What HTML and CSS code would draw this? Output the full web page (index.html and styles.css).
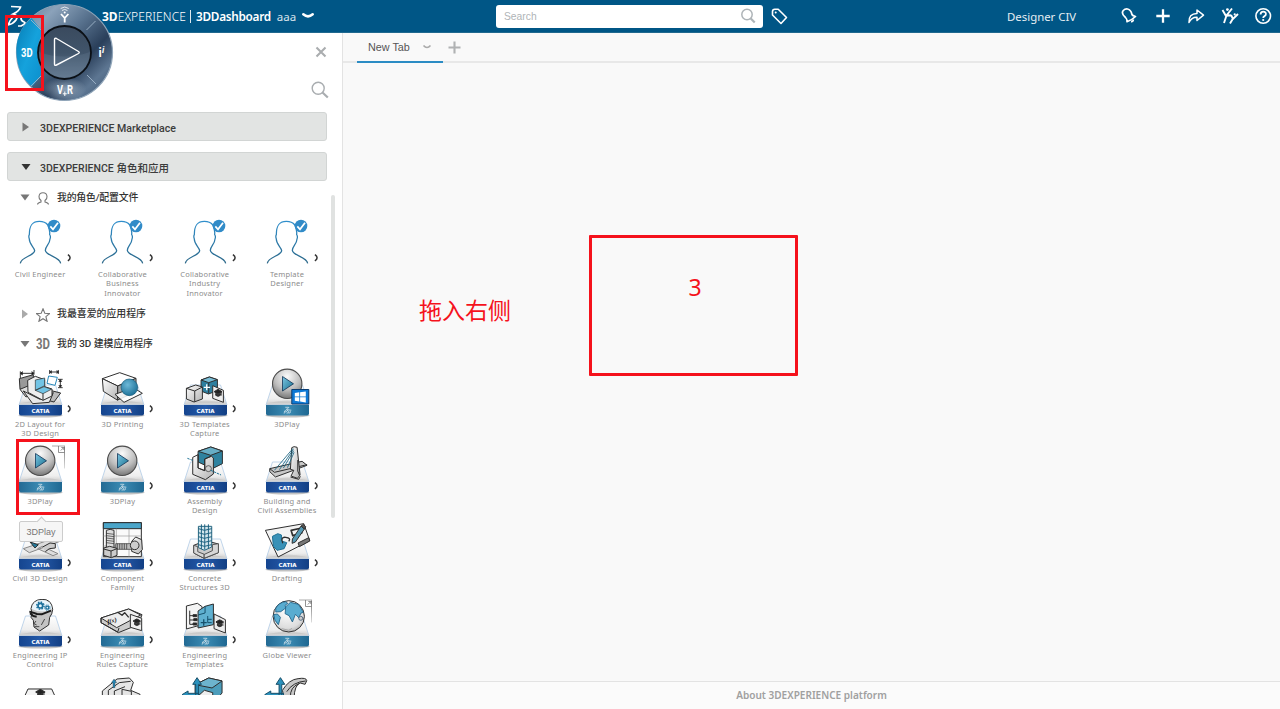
FILE: index.html
```html
<!DOCTYPE html>
<html lang="zh-CN">
<head>
<meta charset="utf-8">
<title>3DDashboard</title>
<link rel="stylesheet" href="styles.css">
</head>
<body>
<svg class="defs" aria-hidden="true">
  <defs>
    <linearGradient id="plate" x1="0" y1="0" x2="0" y2="1"><stop offset="0" stop-color="#fff"/><stop offset=".7" stop-color="#eee"/><stop offset="1" stop-color="#c8c8c8"/></linearGradient>
    <linearGradient id="navy" x1="0" y1="0" x2="1" y2="0"><stop offset="0" stop-color="#15458f"/><stop offset=".5" stop-color="#2459a8"/><stop offset="1" stop-color="#123f84"/></linearGradient>
    <linearGradient id="teal" x1="0" y1="0" x2="1" y2="0"><stop offset="0" stop-color="#236a94"/><stop offset=".5" stop-color="#3b8bb3"/><stop offset="1" stop-color="#1f6892"/></linearGradient>
    <linearGradient id="fade" x1="0" y1="0" x2="0" y2="1"><stop offset="0" stop-color="#777"/><stop offset="1" stop-color="#ddd"/></linearGradient>
    <linearGradient id="gray" x1="0" y1="0" x2="1" y2="1"><stop offset="0" stop-color="#fff"/><stop offset="1" stop-color="#b2b2b2"/></linearGradient>
    <linearGradient id="blue" x1="0" y1="0" x2="1" y2="1"><stop offset="0" stop-color="#7cc6e2"/><stop offset="1" stop-color="#17708f"/></linearGradient>
    <radialGradient id="ball" cx=".5" cy=".25" r=".75"><stop offset="0" stop-color="#fafafa"/><stop offset=".6" stop-color="#bdbdbd"/><stop offset="1" stop-color="#777"/></radialGradient>
    <radialGradient id="globe" cx=".45" cy=".35" r=".75"><stop offset="0" stop-color="#fff"/><stop offset=".7" stop-color="#ddd"/><stop offset="1" stop-color="#999"/></radialGradient>
    <radialGradient id="sphere" cx=".4" cy=".35" r=".7"><stop offset="0" stop-color="#6db9d8"/><stop offset="1" stop-color="#1b6f96"/></radialGradient>
    <linearGradient id="person" x1="0" y1="0" x2="0" y2="1"><stop offset="0" stop-color="#2f8ecb"/><stop offset="1" stop-color="#2b6788"/></linearGradient>
    <linearGradient id="ring" x1="0" y1="0" x2="1" y2="1"><stop offset="0" stop-color="#56708e"/><stop offset=".22" stop-color="#8ba2ba"/><stop offset=".42" stop-color="#5a7490"/><stop offset=".64" stop-color="#2a3f5a"/><stop offset=".8" stop-color="#5d7692"/><stop offset="1" stop-color="#3a536f"/></linearGradient>
    <radialGradient id="south" cx=".5" cy=".5" r=".5"><stop offset="0" stop-color="#a5b8cb" stop-opacity=".8"/><stop offset="1" stop-color="#a5b8cb" stop-opacity="0"/></radialGradient>
    <linearGradient id="core" x1="0" y1="0" x2="0" y2="1"><stop offset="0" stop-color="#3a4a5e"/><stop offset=".5" stop-color="#40546a"/><stop offset="1" stop-color="#61778e"/></linearGradient>
    <linearGradient id="west" x1="0" y1="0" x2="1" y2="1"><stop offset="0" stop-color="#057cb4"/><stop offset=".5" stop-color="#15a2dc"/><stop offset="1" stop-color="#0b8dcb"/></linearGradient>

    <symbol id="swirl" viewBox="0 0 30 27"><path d="M8 2h11c3 1-3 6-8 8c6-1 5 5 0 8q-3 2-5 2M8 13c-5 4-5 8-6 12M21 11c-6 1-6 4-3 7s-1 6-5 6M29 13c-6-1-7 2-4 5s0 6-5 6" fill="none" stroke="#fff" stroke-width="2.600" stroke-linecap="round"/></symbol>
    <symbol id="plinth" viewBox="0 0 82 52">
      <ellipse cx="41.500" cy="47.500" rx="22" ry="2" fill="#777" opacity=".45"/>
      <path d="M26.500 17h30l6.500 20h-43z" fill="url(#plate)" stroke="#b9d0e8" stroke-width=".9"/><path d="M22.500 35q19-5 38 0z" fill="#aaa" opacity=".3"/>
    </symbol>
    <symbol id="catia" viewBox="0 0 82 52"><use href="#plinth"/><path d="M20 37h43v8.500q0 2-2 2h-39q-2 0-2-2z" fill="url(#navy)"/><text class="brand" x="32.500" y="44.600" textLength="18" lengthAdjust="spacingAndGlyphs">CATIA</text></symbol>
    <symbol id="ds" viewBox="0 0 82 52"><use href="#plinth"/><path d="M20 37h43v8.500q0 2-2 2h-39q-2 0-2-2z" fill="url(#teal)"/><use href="#swirl" x="37.500" y="38.500" width="8" height="7.500"/></symbol>
    <symbol id="play" viewBox="0 0 82 52"><use href="#ds"/><circle cx="41.200" cy="15.800" r="14.700" fill="url(#ball)" stroke="#4c4c4c" stroke-width="1.100"/><path d="M36.500 8.500v14.500l11-7.200z" fill="url(#blue)" stroke="#135" stroke-width=".8"/></symbol>
    <symbol id="popout" viewBox="0 0 82 52"><path d="M53 1h13" stroke="#aaa" stroke-width="1"/><path d="M65 1.500h1v22h-1z" fill="url(#fade)"/><path d="M59.500 1v6.500h6M61.800 5.500l3-3m-2.500 0h2.500v2.500" fill="none" stroke="#777" stroke-width=".8"/></symbol>
    <symbol id="chev" viewBox="0 0 82 52"><path d="M68.900 37.700q2.200 1.500 2.200 3t-2.200 3.200" fill="none" stroke="#333" stroke-width="1.500"/></symbol>
    <symbol id="role" viewBox="0 0 82 52">
      <g transform="translate(1 -8) scale(.3333)"><path d="M61 160c2-20 42-22 43-38c-1-10-17-20-16-35q-3-8 0-13C88 48 95 34 118 34s33 14 31 40q4 5 1 13c0 14-14 22-14 34c2 17 43 18 46 39" fill="#fff" stroke="url(#person)" stroke-width="3.800"/>
      <circle cx="162" cy="48" r="19" fill="#318bc8"/><path d="M151 49l8 9 15-20" stroke="#fff" fill="none" stroke-width="5"/></g>
      <use href="#chev" y="-1"/>
    </symbol>
    <symbol id="hat" viewBox="0 0 24 26"><path d="M0 8L12 1l12 7-12 7z" fill="#222"/><path d="M5 13v6q7 6 14 0v-6l-7 4z" fill="#333"/><path d="M22 8v12" stroke="#222" stroke-width="2"/></symbol>
  </defs>
</svg>

<div class="page">
  <header class="topbar">
    <div class="brandline"><b>3D</b><span class="exp">EXPERIENCE</span><i class="bar"></i><b class="dash">3DDashboard</b><span class="space">aaa</span>
      <svg width="12" height="6" viewBox="0 0 12 6"><path d="M1.300 1.300q4.700 4.200 9.400 0" fill="none" stroke="#fff" stroke-width="2.500" stroke-linecap="round"/></svg></div>
    <div class="search"><span>Search</span>
      <svg width="16" height="16" viewBox="0 0 16 16"><g fill="none" stroke="#aeb4b8"><circle cx="7" cy="6.500" r="5.200" stroke-width="1.500"/><path d="M10.700 10.500l4 4" stroke-width="2.200"/></g></svg></div>
    <svg class="tag" width="17" height="17" viewBox="0 0 17 17"><path d="M1.500 3.500q0-2.300 2.300-2.300h3.400l8.300 8.300-5.500 6-8.500-8.500z" fill="none" stroke="#fff" stroke-width="1.600" stroke-linejoin="round"/><circle cx="4.700" cy="4.400" r="1" fill="#fff"/></svg>
    <div class="user">Designer CIV</div>
    <nav class="actions">
      <svg viewBox="0 0 18 18"><path d="M3.300 3.500Q5 1.700 7.500 2q3.500.8 4.300 5 .3 1.700 3.700 2.500-3.500 3.500-8.500 5.200.3-2.500-1.500-4.200Q.8 6.500 3.300 3.500z" fill="none" stroke="#fff" stroke-width="1.700" stroke-linejoin="round"/><path d="M11 14.500q2.300.3 2.300-2" stroke="#fff" stroke-width="1.800" fill="none"/></svg>
      <svg viewBox="0 0 18 18"><path d="M9 2.300v13.400M2.300 9h13.400" stroke="#fff" stroke-width="2.300"/></svg>
      <svg viewBox="0 0 18 18"><path d="M2 15.500q-.5-9 8-9V3l6.500 5.200L10 13.500v-3.300q-5.500-.2-8 5.300z" fill="none" stroke="#fff" stroke-width="1.500" stroke-linejoin="round"/></svg>
      <svg viewBox="0 0 18 18"><path d="M1.500 3l3.500 6L11 1.500M5.500 8.500L3 16M10 8l2 4L17 7M12 11.500l-3 5M5.500 8.800l4.500-.5" fill="none" stroke="#fff" stroke-width="1.900"/><circle cx="6.400" cy="2.600" r="1.400" fill="#fff"/><circle cx="13.700" cy="7.400" r="1.100" fill="#fff"/></svg>
      <svg viewBox="0 0 18 18"><circle cx="9.200" cy="9" r="7.300" fill="none" stroke="#fff" stroke-width="1.600"/><path d="M6.600 7.400q0-2.700 2.700-2.700t2.600 2.400q0 1.300-1.400 2t-1.300 1.900" fill="none" stroke="#fff" stroke-width="1.800"/><circle cx="9.200" cy="13" r="1.100" fill="#fff"/></svg>
    </nav>
  </header>

  <div class="body">
    <aside class="side">
      <div class="tools">
        <svg width="12" height="12" viewBox="0 0 12 12"><path d="M1.500 1.500l9 9M10.500 1.500l-9 9" stroke="#aaadaf" stroke-width="2.100"/></svg>
        <svg class="find" width="18" height="18" viewBox="0 0 18 18"><g fill="none" stroke="#a9adb0"><circle cx="7.200" cy="7.200" r="6" stroke-width="1.400"/><path d="M11.500 11.500l5.300 5" stroke-width="2.200"/></g></svg>
      </div>
      <div class="section"><svg width="10" height="10" viewBox="0 0 10 10"><path d="M1.500.5v9l6.500-4.500z" fill="#777"/></svg><span>3DEXPERIENCE Marketplace</span></div>
      <div class="section second"><svg width="10" height="10" viewBox="0 0 10 10"><path d="M.5 2h9l-4.500 6z" fill="#333"/></svg><span>3DEXPERIENCE 角色和应用</span></div>

      <div class="scroll">
        <div class="sub mine"><svg width="10" height="10" viewBox="0 0 10 10"><path d="M.5 1.500h9l-4.500 6z" fill="#777"/></svg>
          <svg class="pic" width="14" height="14" viewBox="0 0 14 14"><path d="M1.500 12.500q0-1.500 3.500-2.500v-1.500Q2.700 6.500 3 4.500 3.300.7 7 .7t4 3.800q.3 2-2 4V10q3.500 1 3.500 2.500" fill="none" stroke="#777" stroke-width="1.100"/></svg><span>我的角色/配置文件</span></div>
        <div class="grid roles">
          <div class="tile"><svg><use href="#role"/></svg><p>Civil Engineer</p></div>
          <div class="tile"><svg><use href="#role"/></svg><p>Collaborative<br>Business<br>Innovator</p></div>
          <div class="tile"><svg><use href="#role"/></svg><p>Collaborative<br>Industry<br>Innovator</p></div>
          <div class="tile"><svg><use href="#role"/></svg><p>Template<br>Designer</p></div>
        </div>
        <div class="sub fav"><svg width="10" height="10" viewBox="0 0 10 10"><path d="M2 .5v9l6-4.500z" fill="#aaa"/></svg>
          <svg class="pic" width="14" height="14" viewBox="0 0 14 14"><path d="M7 .8l1.800 4.400 4.700.4-3.600 3 1.200 4.700L7 10.700 2.900 13.300l1.200-4.700-3.600-3 4.700-.4z" fill="none" stroke="#777" stroke-width="1.100"/></svg><span>我最喜爱的应用程序</span></div>
        <div class="sub apps3d"><svg width="10" height="10" viewBox="0 0 10 10"><path d="M.5 2h9l-4.500 6z" fill="#777"/></svg><svg class="pic" width="16" height="14" viewBox="0 0 16 14"><text class="threed" x="0" y="12.200" textLength="14" lengthAdjust="spacingAndGlyphs">3D</text></svg><span>我的 3D 建模应用程序</span></div>

        <div class="grid apps">
          <div class="tile"><svg viewBox="0 0 82 52"><use href="#catia"/><g class="ink" transform="translate(1 -7) scale(.3333)">
            <path d="M58 53l42-12v40l-30 8-10-5z" fill="#999"/><path d="M60 85l24-10 10 26-16 7z" fill="#ddd"/><path d="M150 88l32 8-20 27-30-8z" fill="#bbb"/><path d="M70 90l50 25 40-20-12 29-50 4z" fill="#e8e8e8"/>
            <path d="M83 58l23-12 28 10v21l22 7v21l-27 13-45-24z" fill="#eee"/><path d="M106 57l28-6v23l-28 14zM106 88l26-11 22 8-25 13z" fill="#72c4e5" stroke-width="2"/><path d="M129 98v20"/>
            <path d="M61 31v20M102 27v14M62 37h39M149 27v12M175 27v12M150 33h25M174 55h14M174 80h14M181 57v21" stroke="#111" stroke-width="2.500"/><path d="M68 32l-7 5 7 5M95 32l7 5-7 5M155 29l-6 4 6 4M170 29l6 4-6 4M177 62l4-6 4 6M177 73l4 6 4-6" fill="#111"/><path d="M146 45l26 4-7 24-24-6z" fill="#fff" stroke="#2787b8"/>
          </g><use href="#chev"/></svg><p>2D Layout for<br>3D Design</p></div>
          <div class="tile"><svg viewBox="0 0 82 52"><use href="#catia"/><g class="ink" transform="translate(-81.300 -7) scale(.3333)">
            <path d="M308 53l52-18 49 17-55 23z" fill="#fff"/><path d="M308 53l46 22v43l-43-27z" fill="url(#gray)"/><path d="M354 75l55-23v40l-55 25z" fill="#aaa"/><path d="M346 100l55-20 27 17-55 27z" fill="#fff" fill-opacity=".85"/><circle cx="389" cy="79" r="25" fill="url(#sphere)" stroke="#145875" stroke-width="2"/>
          </g><use href="#chev"/></svg><p>3D Printing</p></div>
          <div class="tile"><svg viewBox="0 0 82 52"><use href="#catia"/><g class="ink" transform="translate(6.400 -7) scale(.3333)">
            <path d="M92 57l25-9 24 8v33l-27 10-22-9z" fill="#2d7f9f"/><path d="M92 57l25-9 24 8-26 9z" fill="#79bdd6"/><path d="M115 65v33"/><path d="M100 79h19M109 70v18" stroke="#fff" stroke-width="4"/><path d="M48 82l28-10 20 6v36l-25 9-23-9z" fill="url(#gray)"/><path d="M48 82l25 8v32M73 90l23-12" fill="none"/><path d="M127 74l32 14v36l-32-12z" fill="#eee"/><use href="#hat" x="130" y="84" width="26" height="26"/>
          </g><use href="#chev"/></svg><p>3D Templates<br>Capture</p></div>
          <div class="tile"><svg viewBox="0 0 82 52"><use href="#play"/><path d="M45.800 21.500h17v14.500h-17z" fill="#0d78d4" stroke="#0a3c70"/><path d="M48.800 25l4.500-.7v4.200h-4.500zM54.100 24.200l5.700-.8v5.100h-5.700zM48.800 29.300h4.500v4.200l-4.500-.7zM54.100 29.300h5.700v5.100l-5.700-.8z" fill="#fff"/></svg><p>3DPlay</p></div>

          <div class="tile"><svg viewBox="0 0 82 52"><use href="#play"/><use href="#popout"/></svg><p>3DPlay</p></div>
          <div class="tile"><svg viewBox="0 0 82 52"><use href="#play"/><use href="#chev"/></svg><p>3DPlay</p></div>
          <div class="tile"><svg viewBox="0 0 82 52"><use href="#catia"/><g class="ink" transform="translate(6.400 -84) scale(.3333)">
            <path d="M83 271l38-13 35 12v38l-30 15-43-20z" fill="#2f829f"/><path d="M83 271l38-13 35 12-35 13z" fill="#68aec6"/><path d="M121 283v38"/><path d="M67 289l16-8v40l20 8v-35l20-8 6 5v48l-24 17-38-16z" fill="url(#gray)"/><path d="M83 281v40l20 8v-35l18-8" fill="none"/><circle cx="114" cy="323" r="9" fill="#ccc" stroke-width="2"/><path d="M51 292l18 7M121 328l31 14" stroke="#1b7094" stroke-dasharray="7 3"/>
          </g><use href="#chev"/></svg><p>Assembly<br>Design</p></div>
          <div class="tile"><svg viewBox="0 0 82 52"><use href="#catia"/><g class="ink" transform="translate(-75.900 -84) scale(.3333)">
            <path d="M299 323l97-22 15 12-95 35-17-16z" fill="#c8c8c8"/><path d="M299 323l14 11 98-23" fill="none"/><path d="M365 260l7-3 9 2 9 83-8 10-19-7 8-17-10-3z" fill="url(#gray)"/><path d="M383 297v33l5 12M361 348l25 7 5-9" fill="none"/><path d="M369 262l-56 66M370 265l-42 61M371 269l-31 52M372 274l-20 46" stroke="#17617f" stroke-width="2.500"/>
          </g><use href="#chev"/></svg><p>Building and<br>Civil Assemblies</p></div>

          <div class="tile"><svg viewBox="0 0 82 52"><use href="#catia"/><g class="ink" transform="translate(1 -6) scale(.3333)">
            <path d="M70 98l90-30 20 8-92 34zM127 91l47 22-15 6-46-21z" fill="#ddd" stroke="#888"/><path d="M128 93l22-12 16 2v13l-18 2-12 9" fill="#ccc"/><path d="M90 78l25 8-10 10z" fill="#247a9c"/>
          </g><use href="#chev"/></svg><p>Civil 3D Design</p></div>
          <div class="tile"><svg viewBox="0 0 82 52"><use href="#catia"/><g class="ink" transform="translate(-81.300 -6) scale(.3333)">
            <path d="M311 20h114v102H311z" fill="#fafafa"/><path d="M311 20h114v18H311z" fill="#4aa5c9"/><path d="M311 60h114M311 90h114M350 38v84M388 38v84" stroke="#999" stroke-width="2"/><path d="M348 83h54v17h-54z" fill="#bbb" stroke-width="2"/><path d="M353 83v17m7-17v17m7-17v17m7-17v17m7-17v17" stroke-width="2"/><path d="M320 43q11-6 23 0v52h-23z" fill="#ddd"/><path d="M320 52l23 3m-23 4l23 3m-23 4l23 3m-23 4l23 3m-23 4l23 3" stroke-width="2"/><path d="M312 96l18-5 22 6v21l-17 7-23-7z" fill="#ccc"/><path d="M312 99l22 6 18-7M334 105v19" fill="none"/><path d="M396 76l12-13 18 8 2 30-12 13-20-8z" fill="url(#gray)"/><circle cx="405" cy="88" r="13" fill="#ccc"/>
          </g><use href="#chev"/></svg><p>Component<br>Family</p></div>
          <div class="tile"><svg viewBox="0 0 82 52"><use href="#catia"/><g class="ink" transform="translate(6.400 -6) scale(.3333)">
            <path d="M70 88l36-14 38 10v26l-43 17-31-16z" fill="#ccc"/><path d="M84 31h40v62l-22 10-18-8z" fill="#d5e7ee" stroke="#256580"/><path d="M93 25v74M103 25v76M114 25v72M84 38l18 5 22-5M84 50l18 5 22-5M84 62l18 5 22-5M84 74l18 5 22-5M84 86l18 5 22-5" fill="none" stroke="#1d6282"/><path d="M70 88l12 4v15l20 8 24-11v-18l18-3v27l-43 17-31-16z" fill="#d7d7d7" stroke="#555"/><path d="M101 115v11"/>
          </g><use href="#chev"/></svg><p>Concrete<br>Structures 3D</p></div>
          <div class="tile"><svg viewBox="0 0 82 52"><use href="#catia"/><g class="ink" transform="translate(-75.900 -6) scale(.3333)">
            <path d="M286 43l115-20 18 51-95 49z" fill="#f3f3f3"/><path d="M384 81l32-16 3 10-31 17z" fill="#777"/><path d="M307 61l16-8 11 4v18l16 5-8 18-21 5-11-12z" fill="#3991b7" stroke="#1d6f94"/><path d="M338 82q-8-20 9-18t9 12" fill="none" stroke-width="4"/><path d="M363 43l32-7v15l-27 8z" fill="none" stroke-width="5"/><path d="M393 30l10 9-27 39-10 4 1-13z" fill="#5599b4"/><path d="M393 30l7-5 7 7-4 7z" fill="#555"/>
          </g><use href="#chev"/></svg><p>Drafting</p></div>

          <div class="tile"><svg viewBox="0 0 82 52"><use href="#catia"/><g class="ink" transform="translate(1 -83) scale(.3333)">
            <path d="M93 278q4-27 33-28t32 30q-1 15-9 24l-3 23-27 18-17-12-2-20-7-9 3-12z" fill="#c4c4c4"/><path d="M95 278q4-26 31-26t30 26q-26 17-61 1z" fill="#eaf5fb" stroke="none"/><path d="M88 287l11 3 12 4 14 1 28-11M90 292l10 8 10 2" fill="none" stroke="#1a1a1a" stroke-width="6"/><path d="M108 315l-6 8 8 4M104 332h14M134 309l-10 18" fill="none" stroke-width="2.500"/><g fill="none" stroke="#1b6f9b"><circle cx="121" cy="269" r="7" stroke-width="5"/><circle cx="121" cy="269" r="11" stroke-width="4" stroke-dasharray="4.600 4"/><circle cx="142" cy="275" r="4.500" stroke-width="4"/><circle cx="142" cy="275" r="8" stroke-width="3" stroke-dasharray="3.500 2.800"/></g>
          </g><use href="#chev"/></svg><p>Engineering IP<br>Control</p></div>
          <div class="tile"><svg viewBox="0 0 82 52"><use href="#ds"/><g class="ink" transform="translate(-81.300 -83) scale(.3333)">
            <path d="M304 306l83-27 40 17-11 30-60 24-52-30z" fill="#ccc"/><path d="M304 306l83-27 36 18-72 38z" fill="#eee"/><path d="M304 306v14l50 28 4-12" fill="none"/><text x="324" y="323" class="fx" transform="rotate(-12 324 323)">f(x)</text><path d="M353 288l14 10 8-8 12 14" fill="none" stroke-width="4"/><path d="M392 295l34 12v37l-34-10z" fill="#eee"/><use href="#hat" x="400" y="307" width="23" height="26"/>
          </g><use href="#chev"/></svg><p>Engineering<br>Rules Capture</p></div>
          <div class="tile"><svg viewBox="0 0 82 52"><use href="#ds"/><g class="ink" transform="translate(6.400 -83) scale(.3333)">
            <path d="M48 270l33-8 14 10v54l-47 13z" fill="#f4f4f4"/><path d="M58 284v41h10M58 299h12M58 312h12" fill="none"/><path d="M68 296h11v6H68zM70 308h10v6H70zM68 321h11v6H68z" fill="#222"/><path d="M83 285l21-14 25-7v62l-46 10z" fill="#5fb0d0"/><path d="M91 320h18m-9-10v19" fill="none" stroke="#17516c" stroke-width="4"/><path d="M104 271v20l-21 6M112 300v20h12M112 310h12" fill="none" stroke="#17516c"/><path d="M131 294l34 17v40l-34-13z" fill="#ededed"/><use href="#hat" x="136" y="310" width="24" height="26"/>
          </g><use href="#chev"/></svg><p>Engineering<br>Templates</p></div>
          <div class="tile"><svg viewBox="0 0 82 52"><use href="#ds"/><g transform="translate(-75.900 -83) scale(.3333)">
            <circle cx="356" cy="301" r="47" fill="url(#globe)" stroke="#333" stroke-width="3"/><g fill="#59acd0" stroke="#1d5f85" stroke-width="2.500"><path d="M317 277q9-18 30-20l6 5-8 6 2 8-15 11-15 1z"/><path d="M311 296l11-2 9 10-6 22q-14-12-14-30z"/><path d="M347 272l14-13 24 6 15 24-7 2-7 14-10-10-9 23-10-19-12-6z"/></g><path d="M335 338l21 5 10-6" fill="none" stroke="#aaa" stroke-width="3"/><circle cx="392" cy="307" r="6" fill="#ccc" stroke="#246" stroke-width="2"/>
          </g><use href="#popout"/></svg><p>Globe Viewer</p></div>

          <div class="tile"><svg viewBox="0 0 82 52"><g class="ink" transform="translate(1 -160) scale(.3333)"><path d="M72 545l12-26h71l12 26z" fill="#f4f4f4"/><use href="#hat" x="103" y="519" width="36" height="29"/></g></svg></div>
          <div class="tile"><svg viewBox="0 0 82 52"><g class="ink" transform="translate(-81.300 -160) scale(.3333)"><path d="M308 525l44-36 37-3 12 13-8 24 28 12v26H308z" fill="#e5e5e5"/><path d="M326 545v-22l33-23 34-4M344 545v-20l32-13M367 545v-25l28 6v20" fill="none"/><path d="M340 515v-15h-5l8-11 8 11h-5v15z" fill="#2686b4" stroke-width="1"/></g></svg></div>
          <div class="tile"><svg viewBox="0 0 82 52"><g class="ink" transform="translate(6.400 -160) scale(.3333)"><path d="M74 506l41-20 40 9v36l-21 24H74z" fill="#4c9dbb"/><path d="M74 506l41-20 40 9-30 21z" fill="#6db4ce"/><path d="M82 541l20-18 25 7v25H82z" fill="#eee"/><path d="M76 555v-50h-9l13-20 13 20h-9v50zM35 536l18-11v7h32v8H53v7z" fill="#2b91bc" stroke="#174e68"/></g></svg></div>
          <div class="tile"><svg viewBox="0 0 82 52"><g class="ink" transform="translate(-75.900 -160) scale(.3333)"><path d="M337 523q20-33 47-35 25-4 26 6l-5 11-15-4q-17 7-18 45h-30z" fill="#c7c7c7"/><path d="M350 527q18-29 57-32M361 545q-2-32 26-42" fill="none"/><path d="M327 555v-50h-9l13-20 13 20h-9v50zM284 536l18-11v7h38v8h-38v7z" fill="#2b91bc" stroke="#174e68"/></g></svg></div>
        </div>
        <div class="thumb"></div>
      </div>
    </aside>

    <main class="main">
      <div class="tabs">
        <div class="tab"><span>New Tab</span><svg width="10" height="6" viewBox="0 0 10 6"><path d="M1.500 1.500q3.500 4 7 0" fill="none" stroke="#aaa" stroke-width="1.600"/></svg></div>
        <svg class="add" width="13" height="13" viewBox="0 0 13 13"><path d="M6.500.5v12M.5 6.500h12" stroke="#b0b2b3" stroke-width="2.100"/></svg>
      </div>
      <div class="canvas"></div>
      <footer>About 3DEXPERIENCE platform</footer>
    </main>
  </div>

  <svg class="compass" width="120" height="106" viewBox="0 0 120 106">
    <path d="M11 6.500q6 0 9.500.5-1 4-7.500 7 6 1 3 6-3 4-8 5 2-5 5-8M27 16q-6-1-6 2t3 4-3 4h-3" fill="none" stroke="#fff" stroke-width="1.700"/>
    <circle cx="64.500" cy="52.500" r="48" fill="url(#ring)" stroke="#8fa4b8" stroke-width="1.200"/>
    <ellipse cx="64.500" cy="89" rx="22" ry="12" fill="url(#south)"/>
    <path d="M31.500 18Q15 32 16.500 54T32 86.500L43 74Q32 52 43 32z" fill="url(#west)"/>
    <path d="M31 20l10 10M86.500 30l9-9M41 76L31 86M87 75l9 9" stroke="#9fb4c8" stroke-width=".9"/>
    <circle cx="64.500" cy="52.500" r="26.500" fill="url(#core)" stroke="#0b1016" stroke-width="1.800"/>
    <path d="M39 52q25 9 51 0a25.500 25.500 0 0 1-51 0z" fill="#8296ab" opacity=".18"/>
    <path d="M54.500 40v24q0 2 2 1l22-11.500q1.500-1 0-2L56.500 38.500q-2-1-2 1.500z" fill="none" stroke="#fff" stroke-width="1.400"/>
    <g fill="none" stroke="#fff"><path d="M61 14l3.700 4 3.700-4M64.700 18v4.500" stroke-width="1.800"/><circle cx="64.700" cy="12.500" r="1" fill="#fff" stroke="none"/><path d="M62 10.500q2.700-2.200 5.400 0M60.700 8.500q4-3 8 0" stroke-width=".8"/></g>
    <g class="quad"><text x="21" y="56.500" textLength="11.500" lengthAdjust="spacingAndGlyphs">3D</text><text x="98.500" y="57">i</text><text x="102" y="53" class="sup">i</text><text x="57" y="94" textLength="6" lengthAdjust="spacingAndGlyphs">V</text><text x="67" y="94" textLength="6" lengthAdjust="spacingAndGlyphs">R</text></g>
    <path d="M64.800 91.500v4.500M62.800 93.800h4" stroke="#fff" stroke-width="1"/>
  </svg>
  <div class="tip">3DPlay</div>
  <div class="mark mark-compass"></div>
  <div class="mark mark-play"></div>
  <div class="mark mark-drop">3</div>
  <div class="note">拖入右侧</div>
</div>
</body>
</html>
```
FILE: styles.css
```css
* { box-sizing: border-box; }
body { margin: 0; font-family: "Liberation Sans", "Noto Sans CJK SC", sans-serif; }
.defs { position: absolute; width: 0; height: 0; }
.page { position: relative; width: 1280px; height: 709px; overflow: hidden; background: #fff; display: flex; flex-direction: column; }

.topbar { height: 33px; flex: none; display: flex; align-items: center; background: #005686; border-bottom: 1px solid #20698f; color: #fff; font-family: "Noto Sans", sans-serif; font-size: 12px; padding-left: 102px; }
.brandline { width: 394px; display: flex; align-items: center; height: 32px; white-space: nowrap; }
.exp { font-weight: 300; letter-spacing: .1px; }
.bar { width: 1px; height: 13px; background: #dde8ee; margin: 0 5px 0 4px; }
.dash { font-weight: 600; font-size: 11.8px; letter-spacing: -.3px; }
.space { margin: 0 6px 0 6px; color: #d8e4ec; font-size: 11.5px; }
.search { width: 267px; height: 23px; background: #fff; border-radius: 3px; display: flex; align-items: center; justify-content: space-between; padding: 0 7px 0 8px; font-family: "Liberation Sans", sans-serif; font-size: 10.3px; color: #b0b4b7; }
.tag { margin-left: 8px; }
.user { margin-left: 219px; width: 113px; white-space: nowrap; color: #e6eef3; font-size: 11.4px; }
.actions { display: flex; gap: 15.5px; }
.actions svg { width: 18px; height: 18px; flex: none; }

.body { flex: 1; display: flex; min-height: 0; }
.side { width: 343px; flex: none; border-right: 1px solid #e3e3e3; background: #fff; overflow: hidden; }
.tools { height: 79px; display: flex; flex-direction: column; align-items: flex-end; padding: 13px 13px 0 0; }
.tools > svg:first-child { margin-right: 2.500px; }
.find { margin-top: 23px; }
.section { width: 320px; height: 29px; margin-left: 7px; border: 1px solid #d2d5d4; border-radius: 3px; background: #e2e4e3; display: flex; align-items: center; gap: 9px; padding: 3px 0 0 13px; font: 500 10.6px Roboto, "Noto Sans CJK SC", sans-serif; color: #3c3c3c; white-space: nowrap; }
.section svg { margin-top: -2px; }
.second { margin-top: 11px; padding-top: 1px; font-size: 10.5px; }
.second svg { margin-top: 0; }

.scroll { position: relative; height: 514px; overflow: hidden; }
.sub { height: 20px; margin-top: 7px; display: flex; align-items: center; padding-left: 20px; font: 500 9.9px Roboto, "Noto Sans CJK SC", sans-serif; color: #333; white-space: nowrap; }
.sub.mine { letter-spacing: -.2px; }
.sub .pic { margin: 2px 7px 0 6px; }
.sub span { line-height: 20px; }
.sub.fav { margin-top: 0; }
.sub.apps3d { margin-top: 10px; }
.sub.apps3d .pic { margin: 0 5px 0 6px; }
.threed { font: bold 14px Roboto, sans-serif; fill: #777; }
.grid { display: grid; grid-template-columns: repeat(4, 82.3px); margin-left: -1px; }
.roles { margin-top: 10px; grid-auto-rows: 86px; }
.apps { margin-top: 14px; grid-auto-rows: 77px; }
.tile { text-align: center; }
.tile svg { display: block; width: 82px; height: 52px; }
.tile p { margin: 0; font: 7.5px/9.3px "Noto Sans", sans-serif; letter-spacing: .2px; color: #8c8c8c; white-space: nowrap; }
.ink { stroke: #2e2e2e; stroke-width: 3; stroke-linejoin: round; }
.brand { font: bold 5.5px "DejaVu Sans", sans-serif; fill: #fff; }
.fx { font: italic bold 19px "Liberation Serif", serif; fill: #111; stroke: none; }
.thumb { position: absolute; left: 331px; top: 14px; width: 4px; height: 323px; border-radius: 2px; background: #e0e2e1; }

.main { flex: 1; display: flex; flex-direction: column; background: #f9f9f9; }
.tabs { height: 30px; flex: none; display: flex; align-items: flex-start; border-bottom: 2px solid #e8e8e8; padding-left: 14px; }
.tab { width: 86px; height: 30px; flex: none; border-bottom: 2px solid #2b8cc4; display: flex; align-items: center; gap: 12px; padding-left: 11px; font-size: 10.8px; color: #555; white-space: nowrap; }
.add { margin: 8px 0 0 5px; }
.canvas { flex: 1; }
footer { height: 28px; flex: none; border-top: 1px solid #e3e3e3; background: #fbfbfb; text-align: center; font: 600 10.05px/27px "Noto Sans", sans-serif; color: #a0a0a0; }

.compass { position: absolute; left: 0; top: 0; }
.quad { font: bold 12px Roboto, sans-serif; fill: #fff; }
.sup { font-size: 9px; font-style: italic; }
.tip { position: absolute; left: 19px; top: 521px; width: 44px; height: 21px; border: 1px solid #ccc; border-radius: 2px; background: #f6f6f6; font-size: 9px; line-height: 20px; text-align: center; color: #777; }
.tip::before { content: ""; position: absolute; left: 18px; top: -4px; width: 6px; height: 6px; background: #f6f6f6; border: 1px solid #ccc; border-right: 0; border-bottom: 0; transform: rotate(45deg); }
.mark { position: absolute; border: 3px solid #f5121c; }
.mark-compass { left: 5px; top: 15px; width: 39px; height: 76px; }
.mark-play { left: 16px; top: 439px; width: 64px; height: 76px; }
.mark-drop { left: 589px; top: 235px; width: 209px; height: 141px; border-radius: 1px; text-align: center; padding-left: 3px; font: 23px/99px "Noto Sans", sans-serif; color: #f5121c; }
.note { position: absolute; left: 419px; top: 293px; font: 23px/32px "Noto Sans CJK SC", sans-serif; color: #f5121c; white-space: nowrap; }
```
